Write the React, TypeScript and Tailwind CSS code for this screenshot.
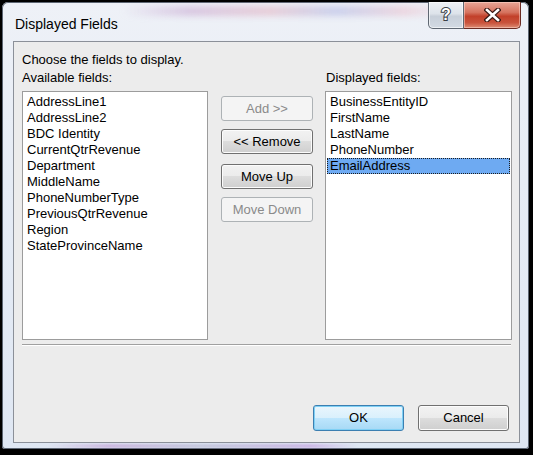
import React from "react";

const available = [
  "AddressLine1",
  "AddressLine2",
  "BDC Identity",
  "CurrentQtrRevenue",
  "Department",
  "MiddleName",
  "PhoneNumberType",
  "PreviousQtrRevenue",
  "Region",
  "StateProvinceName",
];

const displayed = ["BusinessEntityID", "FirstName", "LastName", "PhoneNumber", "EmailAddress"];

function WinButton({
  label,
  disabled,
  isDefault,
  className,
}: {
  label: string;
  disabled?: boolean;
  isDefault?: boolean;
  className?: string;
}) {
  if (disabled) {
    return (
      <div
        className={
          "flex items-center justify-center rounded-[3px] border border-[#adb2b5] bg-[#f4f4f4] text-[13px] text-[#8a8a8a] " +
          (className ?? "")
        }
      >
        {label}
      </div>
    );
  }
  if (isDefault) {
    return (
      <div
        className={
          "flex items-center justify-center rounded-[3px] border border-[#3c7fb1] bg-[linear-gradient(180deg,#eaf6fd_0%,#d9f0fc_50%,#bee6fd_50%,#a7d9f5_100%)] shadow-[inset_0_0_0_1px_#7fd0f5] text-[13px] text-black " +
          (className ?? "")
        }
      >
        {label}
      </div>
    );
  }
  return (
    <div
      className={
        "flex items-center justify-center rounded-[3px] border border-[#707070] bg-[linear-gradient(180deg,#f2f2f2_0%,#ebebeb_50%,#dddddd_50%,#cfcfcf_100%)] shadow-[inset_0_0_0_1px_#fcfcfc] text-[13px] text-black " +
        (className ?? "")
      }
    >
      {label}
    </div>
  );
}

function ListBox({ items, selected }: { items: string[]; selected?: string }) {
  return (
    <div className="mt-[4px] h-[249px] border border-[#9c9c9c] bg-white px-[1px] pt-[2px]">
      {items.map((it) =>
        it === selected ? (
          <div
            key={it}
            className="h-[16px] border border-dotted border-[#1c1c1c] bg-[#6eaaf2] pl-[2px] text-[13px] leading-[14px] text-black"
          >
            {it}
          </div>
        ) : (
          <div key={it} className="h-[16px] pl-[3px] text-[13px] leading-[16px] text-black">
            {it}
          </div>
        )
      )}
    </div>
  );
}

export default function App() {
  return (
    <div className="h-[455px] w-[533px] bg-black pb-[6px] pl-[2px] pr-[4px] pt-[2px] font-['Liberation_Sans',Arial,sans-serif]">
      <div className="relative flex h-full w-full flex-col overflow-hidden rounded-t-[6px] rounded-b-[3px] bg-[linear-gradient(180deg,#eef1f7_0%,#e6ecf5_40%,#dfe7f3_100%)] shadow-[inset_0_0_0_1px_#5d6673]">
        {/* glass streaks */}
        <div className="pointer-events-none absolute left-[120px] top-[4px] h-[10px] w-[330px] rounded-full bg-[linear-gradient(90deg,rgba(200,170,210,0)_0%,rgba(190,150,200,0.45)_20%,rgba(220,140,160,0.35)_45%,rgba(150,160,220,0.4)_65%,rgba(230,150,170,0.3)_85%,rgba(200,170,210,0)_100%)] blur-[3px]" />
        <div className="pointer-events-none absolute bottom-[1px] left-[45px] h-[4px] w-[310px] rounded-full bg-[linear-gradient(90deg,rgba(190,150,210,0)_0%,rgba(190,150,210,0.6)_20%,rgba(170,170,200,0.5)_50%,rgba(190,150,220,0.6)_85%,rgba(190,150,210,0)_100%)] blur-[1px]" />

        {/* title bar */}
        <div className="relative flex h-[39px] shrink-0 items-start">
          <div className="pl-[13px] pt-[13px] text-[14px] leading-[18px] text-black">Displayed Fields</div>
          <div className="ml-auto mr-[8px] flex h-[27px]">
            <div className="flex w-[36px] items-center justify-center rounded-bl-[5px] border border-t-0 border-[#5f6772] bg-[linear-gradient(180deg,#eef1f5_0%,#dde3ea_45%,#c7cfd9_55%,#d3dae3_100%)] shadow-[inset_0_0_0_1px_rgba(255,255,255,0.6)]">
              <span className="text-[16px] font-bold leading-none text-white [-webkit-text-stroke:2px_#3b3f46] [paint-order:stroke_fill]">
                ?
              </span>
            </div>
            <div className="flex w-[57px] items-center justify-center rounded-br-[5px] border border-l-0 border-t-0 border-[#6a2a22] bg-[linear-gradient(180deg,#e7a596_0%,#d5735f_40%,#c2402a_55%,#c9533c_80%,#dd8d75_100%)] shadow-[inset_0_0_0_1px_rgba(255,220,210,0.5)]">
              <svg width="17" height="14" viewBox="0 0 17 14">
                <path d="M3 2 L14 12 M14 2 L3 12" stroke="#3a1a16" strokeWidth="5" strokeLinecap="square" />
                <path d="M3 2 L14 12 M14 2 L3 12" stroke="#ffffff" strokeWidth="2.6" strokeLinecap="square" />
              </svg>
            </div>
          </div>
        </div>

        {/* client area */}
        <div className="relative mb-[6px] ml-[11px] mr-[9px] flex flex-1 flex-col border border-[#8b9099] bg-[#ececec] pb-[11px] pl-[8px] pr-[7px] pt-[9px]">
          <div className="text-[13px] leading-[18px] text-black">Choose the fields to display.</div>
          <div className="flex">
            <div className="flex w-[186px] flex-col">
              <div className="text-[13px] leading-[18px] text-black">Available fields:</div>
              <ListBox items={available} />
            </div>
            <div className="ml-[13px] flex w-[92px] flex-col pt-[27px]">
              <WinButton label="Add >>" disabled className="h-[25px]" />
              <WinButton label="<< Remove" className="mt-[8px] h-[25px]" />
              <WinButton label="Move Up" className="mt-[10px] h-[25px]" />
              <WinButton label="Move Down" disabled className="mt-[8px] h-[25px]" />
            </div>
            <div className="ml-[12px] flex w-[187px] flex-col">
              <div className="pl-[1px] text-[13px] leading-[18px] text-black">Displayed fields:</div>
              <ListBox items={displayed} selected="EmailAddress" />
            </div>
          </div>
          <div className="mt-[4px] h-[2px] w-[489px] border-t border-[#a0a0a0] bg-white" />
          <div className="flex-1" />
          <div className="mr-[3px] flex justify-end gap-[14px]">
            <WinButton label="OK" isDefault className="h-[26px] w-[91px]" />
            <WinButton label="Cancel" className="h-[26px] w-[91px]" />
          </div>
        </div>
      </div>
    </div>
  );
}
